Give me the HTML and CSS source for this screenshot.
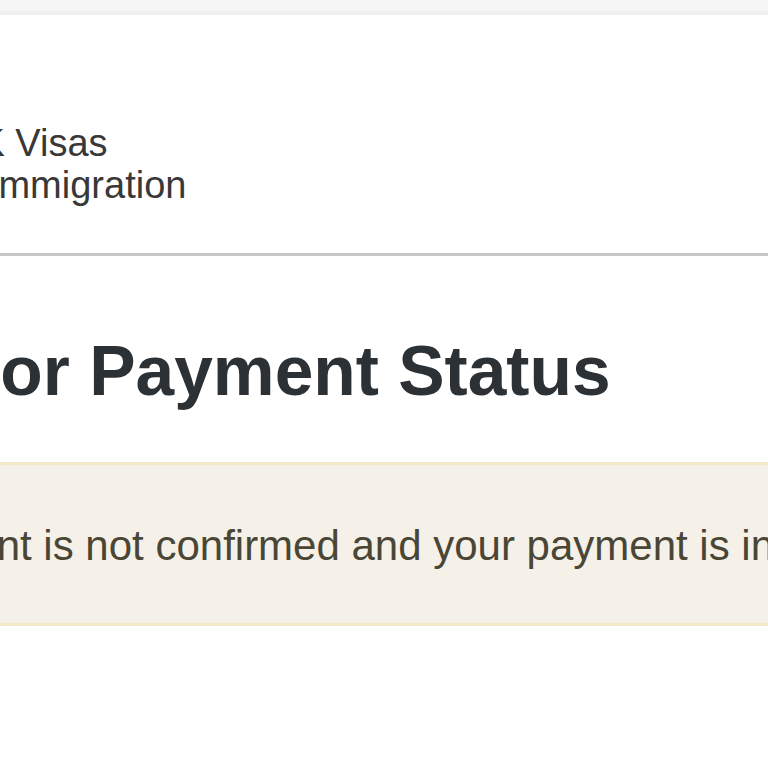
FILE: index.html
```html
<!DOCTYPE html>
<html lang="en">
<head>
  <meta charset="UTF-8">
  <meta name="viewport" content="width=device-width, initial-scale=1.0">
  <title>Sponsor Payment Status</title>
  <link rel="stylesheet" href="styles.css">
</head>
<body>

  <div class="topbar"></div>

  <header class="site-header">
    <div class="page">
      <div class="logo">
        <span class="logo-line">UK Visas</span>
        <span class="logo-line">&amp; Immigration</span>
      </div>
    </div>
  </header>

  <main class="page">
    <h1>Sponsor Payment Status</h1>
  </main>

  <!-- Status notice -->
  <div class="notice">
    <p>Your appointment is not confirmed and your payment is incomplete.</p>
  </div>

</body>
</html>
```

FILE: styles.css
```css
html, body {
  margin: 0;
  padding: 0;
  background-color: #fff;
  overflow: hidden;
}
body {
  font-family: "Liberation Sans", Arial, sans-serif;
  width: 768px;
  height: 768px;
}
.topbar {
  height: 11px;
  background-color: #f6f6f6;
  border-bottom: 4px solid #efefef;
}
.page {
  white-space: nowrap;
}
.site-header {
  height: 238px;
  border-bottom: 3px solid #c6c6c6;
}
.logo {
  margin-left: -48px;
  padding-top: 107px;
  color: #383838;
  font-size: 38px;
  line-height: 42px;
}
.logo-line {
  display: block;
}
h1 {
  margin: 0 0 0 -212px;
  padding-top: 75px;
  font-size: 69.5px;
  line-height: 80px;
  font-weight: bold;
  color: #2c3136;
}
.notice {
  margin-top: 51px;
  height: 154px;
  padding-top: 4px;
  background-color: #f5f1e8;
  border-top: 3px solid #f3e9c8;
  border-bottom: 3px solid #f3e9c8;
  white-space: nowrap;
  display: flex;
  align-items: center;
}
.notice p {
  margin: 0 0 0 -296px;
  font-size: 42px;
  color: #4a4636;
}
```
